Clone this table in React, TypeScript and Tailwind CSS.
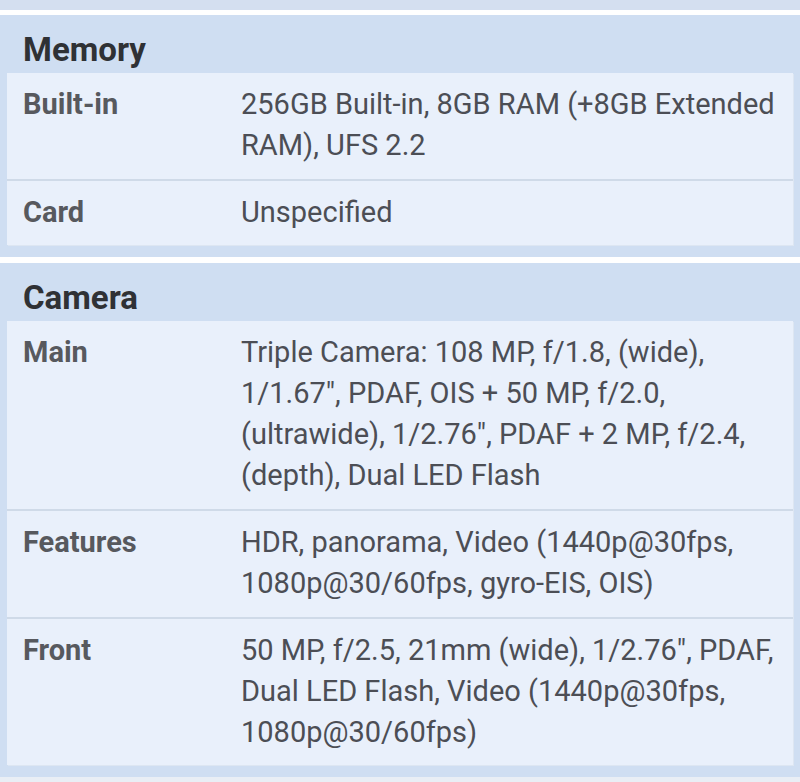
const sections = [
  {
    title: 'Memory',
    rows: [
      { label: 'Built-in', value: '256GB Built-in, 8GB RAM (+8GB Extended RAM), UFS 2.2' },
      { label: 'Card', value: 'Unspecified' },
    ],
  },
  {
    title: 'Camera',
    rows: [
      {
        label: 'Main',
        value:
          'Triple Camera: 108 MP, f/1.8, (wide), 1/1.67", PDAF, OIS + 50 MP, f/2.0, (ultrawide), 1/2.76", PDAF + 2 MP, f/2.4, (depth), Dual LED Flash',
      },
      { label: 'Features', value: 'HDR, panorama, Video (1440p@30fps, 1080p@30/60fps, gyro-EIS, OIS)' },
      {
        label: 'Front',
        value: '50 MP, f/2.5, 21mm (wide), 1/2.76", PDAF, Dual LED Flash, Video (1440p@30fps, 1080p@30/60fps)',
      },
    ],
  },
];

const App = () => {
  return (
    <div className="w-[800px] h-[782px] overflow-hidden bg-[#e9eef5] font-['Roboto','Liberation_Sans',sans-serif]">
      <div className="h-[10px] bg-[#d4dff0]" />
      <div className="h-[5px] bg-white" />
      {sections.map((s, i) => (
        <div key={s.title}>
          {i > 0 && <div className="h-[6px] bg-white" />}
          <div className="bg-[#cfdef2] px-[7px] pb-[12px]">
            <h2 className="h-[58px] pl-4 pt-[15px] text-[33px] leading-[40px] font-bold text-[#2f3135]">{s.title}</h2>
            <div className="bg-[#e9f0fb] shadow-[1px_1px_0_#dde6f2]">
              {s.rows.map((r, j) => (
                <div
                  key={r.label}
                  className={`flex pt-[11px] ${j === s.rows.length - 1 ? 'pb-[12px]' : 'pb-[13px]'} ${j > 0 ? 'border-t-2 border-[#cfdae8]' : ''}`}
                >
                  <div className="w-[234px] shrink-0 pl-4 text-[29px] leading-[41px] font-bold text-[#57595e]">
                    {r.label}
                  </div>
                  <div className="w-[545px] text-[29px] leading-[41px] text-[#4c4e55]">{r.value}</div>
                </div>
              ))}
            </div>
          </div>
        </div>
      ))}
    </div>
  );
};

export default App;
